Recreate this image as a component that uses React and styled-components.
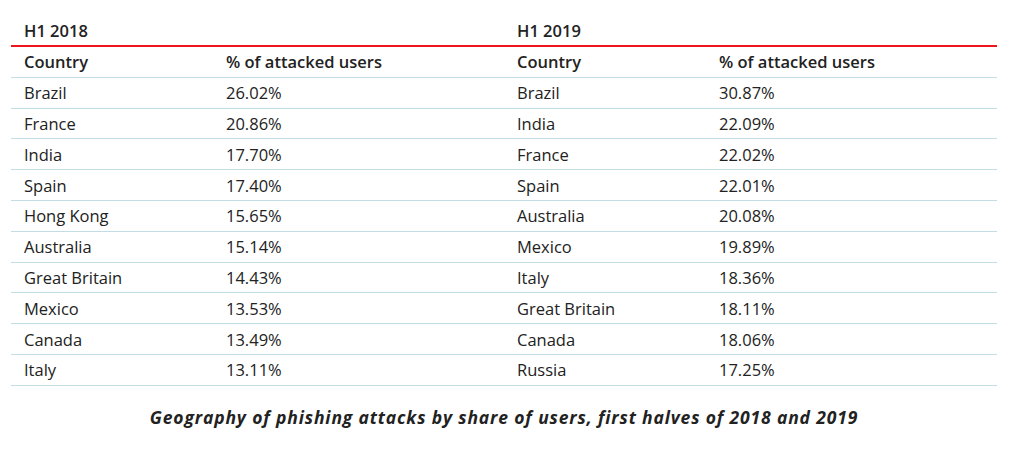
import React from "react";
import styled, { createGlobalStyle } from "styled-components";

const GlobalStyle = createGlobalStyle`
  body {
    margin: 0;
    background: #ffffff;
    font-family: "Open Sans", Lato, sans-serif;
    color: #222222;
  }
`;

const Page = styled.div`
  width: 1024px;
  height: 450px;
  padding: 15px 27px 0 11px;
  box-sizing: border-box;
`;

const Table = styled.div`
  display: grid;
  grid-template-columns: 202px 291px 202px 291px;
  width: 986px;
`;

const Period = styled.div`
  grid-column: span 2;
  height: 30px;
  padding-left: 13px;
  display: flex;
  align-items: center;
  font-size: 16.5px;
  font-weight: 600;
  border-bottom: 2px solid #f0141e;
`;

const Cell = styled.div`
  height: 29.8px;
  padding-left: 13px;
  display: flex;
  align-items: center;
  font-size: 16.5px;
  font-weight: ${({ $head }) => ($head ? 600 : 400)};
  border-bottom: 1px solid #c3dde4;
`;

const Caption = styled.div`
  margin-top: 19px;
  text-align: center;
  font-size: 17.5px;
  font-weight: 700;
  font-style: italic;
  letter-spacing: 0.85px;
  color: #222222;
`;

const h2018 = [
  ["Brazil", "26.02%"],
  ["France", "20.86%"],
  ["India", "17.70%"],
  ["Spain", "17.40%"],
  ["Hong Kong", "15.65%"],
  ["Australia", "15.14%"],
  ["Great Britain", "14.43%"],
  ["Mexico", "13.53%"],
  ["Canada", "13.49%"],
  ["Italy", "13.11%"],
];

const h2019 = [
  ["Brazil", "30.87%"],
  ["India", "22.09%"],
  ["France", "22.02%"],
  ["Spain", "22.01%"],
  ["Australia", "20.08%"],
  ["Mexico", "19.89%"],
  ["Italy", "18.36%"],
  ["Great Britain", "18.11%"],
  ["Canada", "18.06%"],
  ["Russia", "17.25%"],
];

export default function App() {
  return (
    <Page>
      <GlobalStyle />
      <Table>
        <Period>H1 2018</Period>
        <Period>H1 2019</Period>
        <Cell $head>Country</Cell>
        <Cell $head>% of attacked users</Cell>
        <Cell $head>Country</Cell>
        <Cell $head>% of attacked users</Cell>
        {h2018.map((row, i) => (
          <React.Fragment key={i}>
            <Cell>{row[0]}</Cell>
            <Cell>{row[1]}</Cell>
            <Cell>{h2019[i][0]}</Cell>
            <Cell>{h2019[i][1]}</Cell>
          </React.Fragment>
        ))}
      </Table>
      <Caption>
        Geography of phishing attacks by share of users, first halves of 2018 and 2019
      </Caption>
    </Page>
  );
}
